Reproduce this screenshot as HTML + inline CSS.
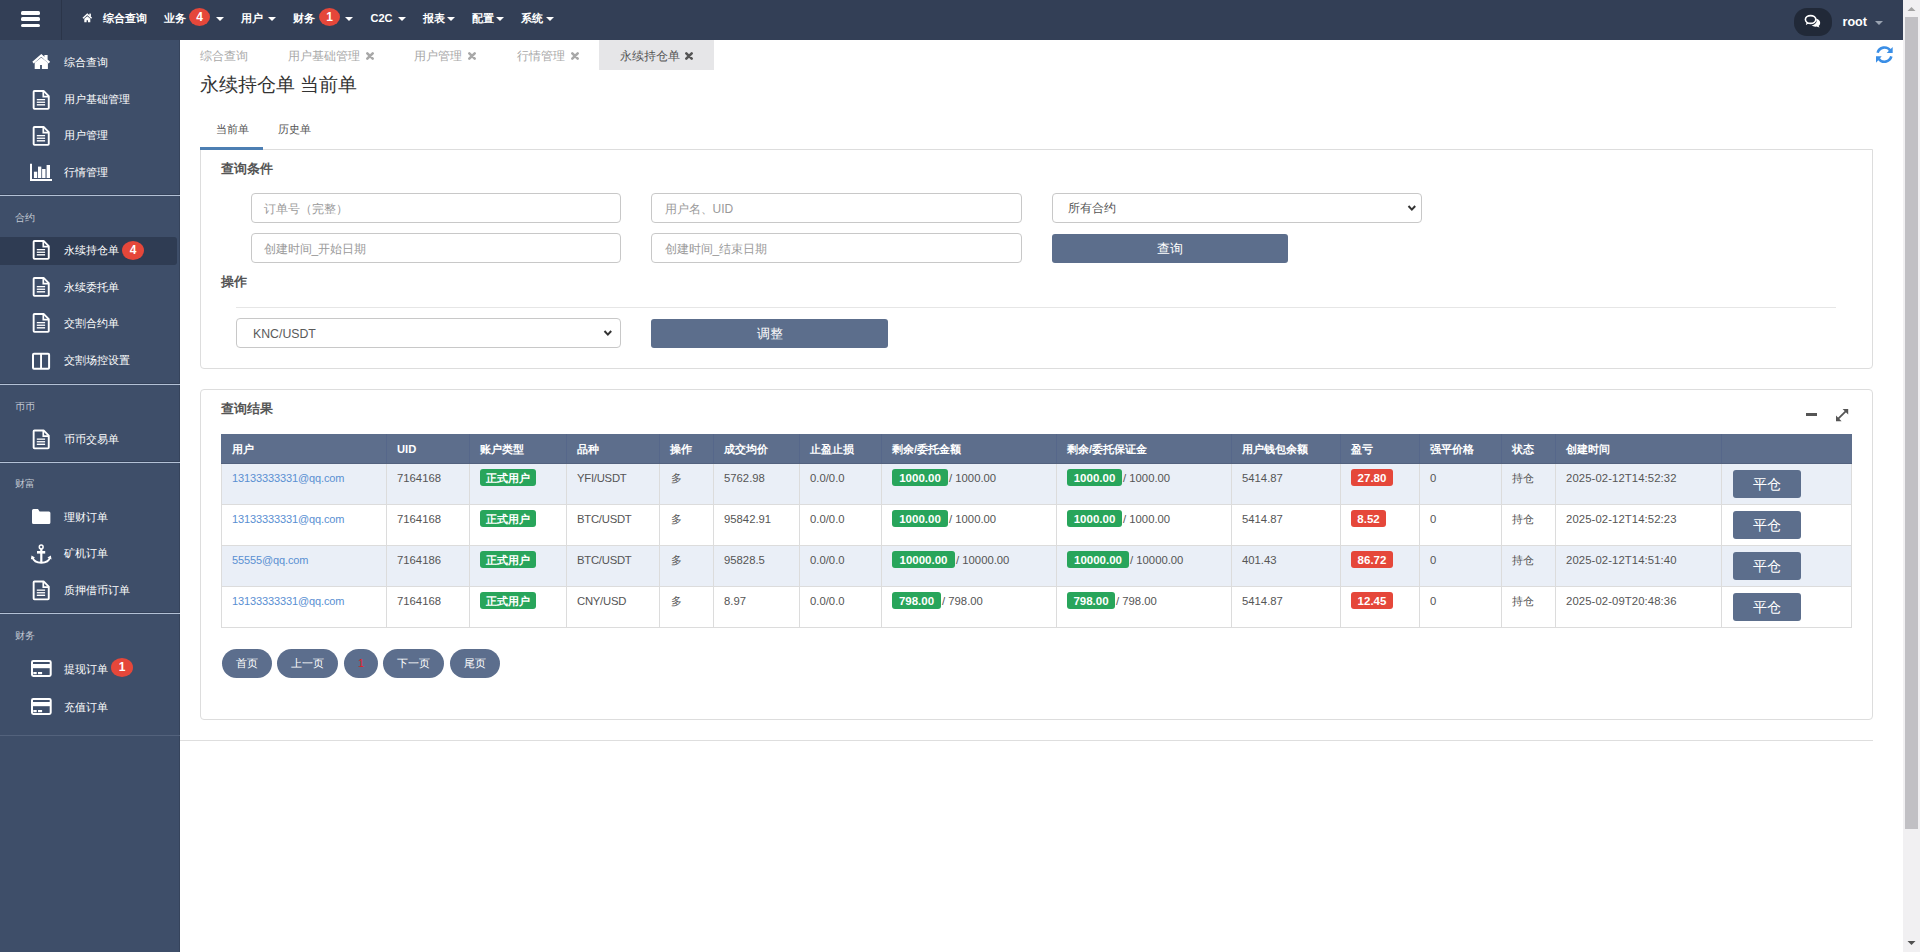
<!DOCTYPE html>
<html><head><meta charset="utf-8"><style>
*{box-sizing:border-box;margin:0;padding:0}
html,body{width:1920px;height:952px;overflow:hidden;background:#fff;font-family:"Liberation Sans",sans-serif;font-size:12px;color:#555}
.a{position:absolute}
.t{position:absolute;white-space:nowrap}
#ov{position:absolute;left:0;top:0}
</style></head><body>
<div class="a" style="left:0px;top:0px;width:1903px;height:40px;background:#333f56;"></div>
<div class="a" style="left:61px;top:0px;width:1px;height:40px;background:#2b3549;"></div>
<div class="a" style="left:21px;top:11px;width:19px;height:3.5px;background:#fff;border-radius:1.5px"></div>
<div class="a" style="left:21px;top:17px;width:19px;height:3.5px;background:#fff;border-radius:1.5px"></div>
<div class="a" style="left:21px;top:23.5px;width:19px;height:3.5px;background:#fff;border-radius:1.5px"></div>
<div class="t" style="left:102.5px;top:13px;font-size:11px;line-height:11px;color:#fff;font-weight:700;">综合查询</div>
<div class="t" style="left:164px;top:13px;font-size:11px;line-height:11px;color:#fff;font-weight:700;">业务</div>
<div class="a" style="left:189px;top:8px;width:21px;height:18px;border-radius:50%;background:#e5473a;color:#fff;font-weight:bold;font-size:12px;line-height:18px;text-align:center">4</div>
<div class="t" style="left:241px;top:13px;font-size:11px;line-height:11px;color:#fff;font-weight:700;">用户</div>
<div class="t" style="left:293px;top:13px;font-size:11px;line-height:11px;color:#fff;font-weight:700;">财务</div>
<div class="a" style="left:319px;top:8px;width:21px;height:18px;border-radius:50%;background:#e5473a;color:#fff;font-weight:bold;font-size:12px;line-height:18px;text-align:center">1</div>
<div class="t" style="left:370.5px;top:13.3px;font-size:11px;line-height:11px;color:#fff;font-weight:700;">C2C</div>
<div class="t" style="left:423px;top:13px;font-size:11px;line-height:11px;color:#fff;font-weight:700;">报表</div>
<div class="t" style="left:472px;top:13px;font-size:11px;line-height:11px;color:#fff;font-weight:700;">配置</div>
<div class="t" style="left:521px;top:13px;font-size:11px;line-height:11px;color:#fff;font-weight:700;">系统</div>
<div class="a" style="left:1794px;top:8px;width:38px;height:28px;background:#212938;border-radius:13px"></div>
<div class="t" style="left:1842.5px;top:15.5px;font-size:12.6px;line-height:12.6px;color:#fff;font-weight:700;">root</div>
<div class="a" style="left:0px;top:40px;width:180px;height:912px;background:#3e4e69;"></div>
<div class="a" style="left:179px;top:40px;width:1px;height:912px;background:#36445c;"></div>
<div class="t" style="left:64px;top:57px;font-size:11.2px;line-height:11.2px;color:#fff;font-weight:500;">综合查询</div>
<div class="t" style="left:64px;top:94px;font-size:11.2px;line-height:11.2px;color:#fff;font-weight:500;">用户基础管理</div>
<div class="t" style="left:64px;top:130px;font-size:11.2px;line-height:11.2px;color:#fff;font-weight:500;">用户管理</div>
<div class="t" style="left:64px;top:167px;font-size:11.2px;line-height:11.2px;color:#fff;font-weight:500;">行情管理</div>
<div class="a" style="left:0px;top:194px;width:180px;height:1px;background:#34425a;"></div>
<div class="a" style="left:0px;top:195px;width:180px;height:1px;background:#b3c1d6;"></div>
<div class="t" style="left:15px;top:212.5px;font-size:10px;line-height:10px;color:#c3c9d3;font-weight:500;">合约</div>
<div class="a" style="left:0px;top:237px;width:177px;height:28px;background:#2f3c53;border-radius:0 3px 3px 0"></div>
<div class="t" style="left:64px;top:245px;font-size:11.2px;line-height:11.2px;color:#fff;font-weight:500;">永续持仓单</div>
<div class="a" style="left:122px;top:241px;width:22px;height:19px;border-radius:50%;background:#e5473a;color:#fff;font-weight:bold;font-size:12px;line-height:19px;text-align:center">4</div>
<div class="t" style="left:64px;top:282px;font-size:11.2px;line-height:11.2px;color:#fff;font-weight:500;">永续委托单</div>
<div class="t" style="left:64px;top:318px;font-size:11.2px;line-height:11.2px;color:#fff;font-weight:500;">交割合约单</div>
<div class="t" style="left:64px;top:355px;font-size:11.2px;line-height:11.2px;color:#fff;font-weight:500;">交割场控设置</div>
<div class="a" style="left:0px;top:383px;width:180px;height:1px;background:#34425a;"></div>
<div class="a" style="left:0px;top:384px;width:180px;height:1px;background:#b3c1d6;"></div>
<div class="t" style="left:15px;top:401.5px;font-size:10px;line-height:10px;color:#c3c9d3;font-weight:500;">币币</div>
<div class="t" style="left:64px;top:434px;font-size:11.2px;line-height:11.2px;color:#fff;font-weight:500;">币币交易单</div>
<div class="a" style="left:0px;top:461px;width:180px;height:1px;background:#34425a;"></div>
<div class="a" style="left:0px;top:462px;width:180px;height:1px;background:#b3c1d6;"></div>
<div class="t" style="left:15px;top:479px;font-size:10px;line-height:10px;color:#c3c9d3;font-weight:500;">财富</div>
<div class="t" style="left:64px;top:512px;font-size:11.2px;line-height:11.2px;color:#fff;font-weight:500;">理财订单</div>
<div class="t" style="left:64px;top:548px;font-size:11.2px;line-height:11.2px;color:#fff;font-weight:500;">矿机订单</div>
<div class="t" style="left:64px;top:585px;font-size:11.2px;line-height:11.2px;color:#fff;font-weight:500;">质押借币订单</div>
<div class="a" style="left:0px;top:612px;width:180px;height:1px;background:#34425a;"></div>
<div class="a" style="left:0px;top:613px;width:180px;height:1px;background:#b3c1d6;"></div>
<div class="t" style="left:15px;top:630.5px;font-size:10px;line-height:10px;color:#c3c9d3;font-weight:500;">财务</div>
<div class="t" style="left:64px;top:664px;font-size:11.2px;line-height:11.2px;color:#fff;font-weight:500;">提现订单</div>
<div class="a" style="left:111px;top:658px;width:22px;height:19px;border-radius:50%;background:#e5473a;color:#fff;font-weight:bold;font-size:12px;line-height:19px;text-align:center">1</div>
<div class="t" style="left:64px;top:702px;font-size:11.2px;line-height:11.2px;color:#fff;font-weight:500;">充值订单</div>
<div class="a" style="left:0px;top:735px;width:180px;height:1px;background:#53627c;"></div>
<div class="t" style="left:200px;top:50px;font-size:12px;line-height:12px;color:#a8a8a8;font-weight:500;">综合查询</div>
<div class="t" style="left:288px;top:50px;font-size:12px;line-height:12px;color:#a8a8a8;font-weight:500;">用户基础管理</div>
<div class="t" style="left:414px;top:50px;font-size:12px;line-height:12px;color:#a8a8a8;font-weight:500;">用户管理</div>
<div class="t" style="left:516.5px;top:50px;font-size:12px;line-height:12px;color:#a8a8a8;font-weight:500;">行情管理</div>
<div class="a" style="left:599px;top:40px;width:115px;height:30px;background:#e6e6e8;"></div>
<div class="t" style="left:619.5px;top:50px;font-size:12px;line-height:12px;color:#555;font-weight:500;">永续持仓单</div>
<div class="t" style="left:200px;top:75.5px;font-size:18.8px;line-height:18.8px;color:#333;font-weight:400;">永续持仓单 当前单</div>
<div class="t" style="left:215.5px;top:123.5px;font-size:11.2px;line-height:11.2px;color:#555;font-weight:500;">当前单</div>
<div class="t" style="left:278px;top:123.5px;font-size:11.2px;line-height:11.2px;color:#555;font-weight:500;">历史单</div>
<div class="a" style="left:200px;top:149px;width:1673px;height:220px;border:1px solid #ddd;border-top-color:#ddd;border-radius:0 0 4px 4px"></div>
<div class="a" style="left:200px;top:147px;width:63px;height:2.5px;background:#4d7fb3;"></div>
<div class="t" style="left:221px;top:163px;font-size:12.8px;line-height:12.8px;color:#555;font-weight:700;">查询条件</div>
<div class="a" style="left:251px;top:193px;width:370px;height:30px;border:1px solid #c8c8c8;border-radius:4px;background:#fff"></div>
<div class="t" style="left:263.5px;top:202.5px;font-size:12px;line-height:12px;color:#9a9a9a;font-weight:500;">订单号（完整）</div>
<div class="a" style="left:651px;top:193px;width:371px;height:30px;border:1px solid #c8c8c8;border-radius:4px;background:#fff"></div>
<div class="t" style="left:664.5px;top:202.5px;font-size:12px;line-height:12px;color:#9a9a9a;font-weight:500;">用户名、UID</div>
<div class="a" style="left:1052px;top:193px;width:370px;height:30px;border:1px solid #c8c8c8;border-radius:4px;background:#fff"></div>
<div class="t" style="left:1067.5px;top:202.5px;font-size:11.5px;line-height:11.5px;color:#555;font-weight:500;">所有合约</div>
<div class="a" style="left:251px;top:233px;width:370px;height:30px;border:1px solid #c8c8c8;border-radius:4px;background:#fff"></div>
<div class="t" style="left:263.5px;top:242.5px;font-size:12px;line-height:12px;color:#9a9a9a;font-weight:500;">创建时间_开始日期</div>
<div class="a" style="left:651px;top:233px;width:371px;height:30px;border:1px solid #c8c8c8;border-radius:4px;background:#fff"></div>
<div class="t" style="left:664.5px;top:242.5px;font-size:12px;line-height:12px;color:#9a9a9a;font-weight:500;">创建时间_结束日期</div>
<div class="a" style="left:1052px;top:234px;width:236px;height:29px;background:#5c6e8c;border-radius:3px;color:#fff;font-size:13px;font-weight:500;line-height:29px;text-align:center">查询</div>
<div class="t" style="left:221px;top:276px;font-size:12.8px;line-height:12.8px;color:#555;font-weight:700;">操作</div>
<div class="a" style="left:236px;top:307px;width:1600px;height:1px;background:#e6e6e6;"></div>
<div class="a" style="left:236px;top:318px;width:385px;height:30px;border:1px solid #c8c8c8;border-radius:4px;background:#fff"></div>
<div class="t" style="left:253px;top:328px;font-size:12.3px;line-height:12.3px;color:#5a5a5a;font-weight:400;">KNC/USDT</div>
<div class="a" style="left:651px;top:319px;width:237px;height:29px;background:#5c6e8c;border-radius:3px;color:#fff;font-size:13px;font-weight:500;line-height:29px;text-align:center">调整</div>
<div class="a" style="left:200px;top:389px;width:1673px;height:331px;border:1px solid #ddd;border-radius:4px"></div>
<div class="t" style="left:221px;top:403px;font-size:12.8px;line-height:12.8px;color:#555;font-weight:700;">查询结果</div>
<div class="a" style="left:1806px;top:413px;width:11px;height:3px;background:#555;"></div>
<div class="a" style="left:221px;top:434px;width:1631px;height:30px;background:#5d6e8c;"></div>
<div class="a" style="left:221px;top:463px;width:1631px;height:1px;background:#53627e;"></div>
<div class="a" style="left:221px;top:464px;width:1631px;height:41px;background:#eaeff7;"></div>
<div class="a" style="left:221px;top:505px;width:1631px;height:41px;background:#fff;"></div>
<div class="a" style="left:221px;top:546px;width:1631px;height:41px;background:#eaeff7;"></div>
<div class="a" style="left:221px;top:587px;width:1631px;height:41px;background:#fff;"></div>
<div class="a" style="left:221px;top:504px;width:1631px;height:1px;background:#dcdcdc;"></div>
<div class="a" style="left:221px;top:545px;width:1631px;height:1px;background:#dcdcdc;"></div>
<div class="a" style="left:221px;top:586px;width:1631px;height:1px;background:#dcdcdc;"></div>
<div class="a" style="left:221px;top:627px;width:1631px;height:1px;background:#dcdcdc;"></div>
<div class="a" style="left:386px;top:434px;width:1px;height:29px;background:#56678a;"></div>
<div class="a" style="left:386px;top:464px;width:1px;height:164px;background:#dcdcdc;"></div>
<div class="a" style="left:469px;top:434px;width:1px;height:29px;background:#56678a;"></div>
<div class="a" style="left:469px;top:464px;width:1px;height:164px;background:#dcdcdc;"></div>
<div class="a" style="left:566px;top:434px;width:1px;height:29px;background:#56678a;"></div>
<div class="a" style="left:566px;top:464px;width:1px;height:164px;background:#dcdcdc;"></div>
<div class="a" style="left:659px;top:434px;width:1px;height:29px;background:#56678a;"></div>
<div class="a" style="left:659px;top:464px;width:1px;height:164px;background:#dcdcdc;"></div>
<div class="a" style="left:713px;top:434px;width:1px;height:29px;background:#56678a;"></div>
<div class="a" style="left:713px;top:464px;width:1px;height:164px;background:#dcdcdc;"></div>
<div class="a" style="left:799px;top:434px;width:1px;height:29px;background:#56678a;"></div>
<div class="a" style="left:799px;top:464px;width:1px;height:164px;background:#dcdcdc;"></div>
<div class="a" style="left:881px;top:434px;width:1px;height:29px;background:#56678a;"></div>
<div class="a" style="left:881px;top:464px;width:1px;height:164px;background:#dcdcdc;"></div>
<div class="a" style="left:1056px;top:434px;width:1px;height:29px;background:#56678a;"></div>
<div class="a" style="left:1056px;top:464px;width:1px;height:164px;background:#dcdcdc;"></div>
<div class="a" style="left:1231px;top:434px;width:1px;height:29px;background:#56678a;"></div>
<div class="a" style="left:1231px;top:464px;width:1px;height:164px;background:#dcdcdc;"></div>
<div class="a" style="left:1340px;top:434px;width:1px;height:29px;background:#56678a;"></div>
<div class="a" style="left:1340px;top:464px;width:1px;height:164px;background:#dcdcdc;"></div>
<div class="a" style="left:1419px;top:434px;width:1px;height:29px;background:#56678a;"></div>
<div class="a" style="left:1419px;top:464px;width:1px;height:164px;background:#dcdcdc;"></div>
<div class="a" style="left:1501px;top:434px;width:1px;height:29px;background:#56678a;"></div>
<div class="a" style="left:1501px;top:464px;width:1px;height:164px;background:#dcdcdc;"></div>
<div class="a" style="left:1555px;top:434px;width:1px;height:29px;background:#56678a;"></div>
<div class="a" style="left:1555px;top:464px;width:1px;height:164px;background:#dcdcdc;"></div>
<div class="a" style="left:1721px;top:434px;width:1px;height:29px;background:#56678a;"></div>
<div class="a" style="left:1721px;top:464px;width:1px;height:164px;background:#dcdcdc;"></div>
<div class="a" style="left:221px;top:464px;width:1px;height:164px;background:#dcdcdc;"></div>
<div class="a" style="left:1851px;top:464px;width:1px;height:164px;background:#dcdcdc;"></div>
<div class="t" style="left:232px;top:443.5px;font-size:11.2px;line-height:11.2px;color:#fff;font-weight:700;">用户</div>
<div class="t" style="left:397px;top:443.5px;font-size:11.2px;line-height:11.2px;color:#fff;font-weight:700;">UID</div>
<div class="t" style="left:480px;top:443.5px;font-size:11.2px;line-height:11.2px;color:#fff;font-weight:700;">账户类型</div>
<div class="t" style="left:577px;top:443.5px;font-size:11.2px;line-height:11.2px;color:#fff;font-weight:700;">品种</div>
<div class="t" style="left:670px;top:443.5px;font-size:11.2px;line-height:11.2px;color:#fff;font-weight:700;">操作</div>
<div class="t" style="left:724px;top:443.5px;font-size:11.2px;line-height:11.2px;color:#fff;font-weight:700;">成交均价</div>
<div class="t" style="left:810px;top:443.5px;font-size:11.2px;line-height:11.2px;color:#fff;font-weight:700;">止盈止损</div>
<div class="t" style="left:892px;top:443.5px;font-size:11.2px;line-height:11.2px;color:#fff;font-weight:700;">剩余/委托金额</div>
<div class="t" style="left:1067px;top:443.5px;font-size:11.2px;line-height:11.2px;color:#fff;font-weight:700;">剩余/委托保证金</div>
<div class="t" style="left:1242px;top:443.5px;font-size:11.2px;line-height:11.2px;color:#fff;font-weight:700;">用户钱包余额</div>
<div class="t" style="left:1351px;top:443.5px;font-size:11.2px;line-height:11.2px;color:#fff;font-weight:700;">盈亏</div>
<div class="t" style="left:1430px;top:443.5px;font-size:11.2px;line-height:11.2px;color:#fff;font-weight:700;">强平价格</div>
<div class="t" style="left:1512px;top:443.5px;font-size:11.2px;line-height:11.2px;color:#fff;font-weight:700;">状态</div>
<div class="t" style="left:1566px;top:443.5px;font-size:11.2px;line-height:11.2px;color:#fff;font-weight:700;">创建时间</div>
<div class="t" style="left:232px;top:473px;font-size:11px;line-height:11px;color:#5a8fd2;font-weight:400;letter-spacing:-0.12px">13133333331@qq.com</div>
<div class="t" style="left:397px;top:473px;font-size:11.3px;line-height:11.3px;color:#555;font-weight:400;letter-spacing:0px">7164168</div>
<div class="a" style="left:480px;top:469px;width:56px;height:17px;border-radius:3px;background:#28a55b;color:#fff;font-weight:bold;font-size:11px;line-height:18.5px;text-align:center">正式用户</div>
<div class="t" style="left:577px;top:473px;font-size:11.3px;line-height:11.3px;color:#555;font-weight:400;letter-spacing:-0.25px">YFI/USDT</div>
<div class="t" style="left:670.5px;top:473px;font-size:11px;line-height:11px;color:#555;font-weight:500;">多</div>
<div class="t" style="left:724px;top:473px;font-size:11.3px;line-height:11.3px;color:#555;font-weight:400;letter-spacing:0px">5762.98</div>
<div class="t" style="left:810px;top:473px;font-size:11.3px;line-height:11.3px;color:#555;font-weight:400;letter-spacing:0px">0.0/0.0</div>
<div class="a" style="left:892px;top:469px;width:56px;height:17px;border-radius:3px;background:#28a55b;color:#fff;font-weight:bold;font-size:11.5px;line-height:18.5px;text-align:center">1000.00</div>
<div class="t" style="left:949px;top:473px;font-size:11.3px;line-height:11.3px;color:#555;font-weight:400;letter-spacing:0px">/ 1000.00</div>
<div class="a" style="left:1067px;top:469px;width:55px;height:17px;border-radius:3px;background:#28a55b;color:#fff;font-weight:bold;font-size:11.5px;line-height:18.5px;text-align:center">1000.00</div>
<div class="t" style="left:1123px;top:473px;font-size:11.3px;line-height:11.3px;color:#555;font-weight:400;letter-spacing:0px">/ 1000.00</div>
<div class="t" style="left:1242px;top:473px;font-size:11.3px;line-height:11.3px;color:#555;font-weight:400;letter-spacing:0px">5414.87</div>
<div class="a" style="left:1351px;top:469px;width:42px;height:17px;border-radius:3px;background:#e5473a;color:#fff;font-weight:bold;font-size:11.5px;line-height:18.5px;text-align:center">27.80</div>
<div class="t" style="left:1430px;top:473px;font-size:11.3px;line-height:11.3px;color:#555;font-weight:400;letter-spacing:0px">0</div>
<div class="t" style="left:1511.5px;top:473px;font-size:11px;line-height:11px;color:#555;font-weight:500;">持仓</div>
<div class="t" style="left:1566px;top:473px;font-size:11.3px;line-height:11.3px;color:#555;font-weight:400;letter-spacing:0.1px">2025-02-12T14:52:32</div>
<div class="a" style="left:1733px;top:470px;width:68px;height:28px;background:#5c6e8c;border-radius:3px;color:#fff;font-size:14px;font-weight:500;line-height:28px;text-align:center">平仓</div>
<div class="t" style="left:232px;top:514px;font-size:11px;line-height:11px;color:#5a8fd2;font-weight:400;letter-spacing:-0.12px">13133333331@qq.com</div>
<div class="t" style="left:397px;top:514px;font-size:11.3px;line-height:11.3px;color:#555;font-weight:400;letter-spacing:0px">7164168</div>
<div class="a" style="left:480px;top:510px;width:56px;height:17px;border-radius:3px;background:#28a55b;color:#fff;font-weight:bold;font-size:11px;line-height:18.5px;text-align:center">正式用户</div>
<div class="t" style="left:577px;top:514px;font-size:11.3px;line-height:11.3px;color:#555;font-weight:400;letter-spacing:-0.25px">BTC/USDT</div>
<div class="t" style="left:670.5px;top:514px;font-size:11px;line-height:11px;color:#555;font-weight:500;">多</div>
<div class="t" style="left:724px;top:514px;font-size:11.3px;line-height:11.3px;color:#555;font-weight:400;letter-spacing:0px">95842.91</div>
<div class="t" style="left:810px;top:514px;font-size:11.3px;line-height:11.3px;color:#555;font-weight:400;letter-spacing:0px">0.0/0.0</div>
<div class="a" style="left:892px;top:510px;width:56px;height:17px;border-radius:3px;background:#28a55b;color:#fff;font-weight:bold;font-size:11.5px;line-height:18.5px;text-align:center">1000.00</div>
<div class="t" style="left:949px;top:514px;font-size:11.3px;line-height:11.3px;color:#555;font-weight:400;letter-spacing:0px">/ 1000.00</div>
<div class="a" style="left:1067px;top:510px;width:55px;height:17px;border-radius:3px;background:#28a55b;color:#fff;font-weight:bold;font-size:11.5px;line-height:18.5px;text-align:center">1000.00</div>
<div class="t" style="left:1123px;top:514px;font-size:11.3px;line-height:11.3px;color:#555;font-weight:400;letter-spacing:0px">/ 1000.00</div>
<div class="t" style="left:1242px;top:514px;font-size:11.3px;line-height:11.3px;color:#555;font-weight:400;letter-spacing:0px">5414.87</div>
<div class="a" style="left:1351px;top:510px;width:35px;height:17px;border-radius:3px;background:#e5473a;color:#fff;font-weight:bold;font-size:11.5px;line-height:18.5px;text-align:center">8.52</div>
<div class="t" style="left:1430px;top:514px;font-size:11.3px;line-height:11.3px;color:#555;font-weight:400;letter-spacing:0px">0</div>
<div class="t" style="left:1511.5px;top:514px;font-size:11px;line-height:11px;color:#555;font-weight:500;">持仓</div>
<div class="t" style="left:1566px;top:514px;font-size:11.3px;line-height:11.3px;color:#555;font-weight:400;letter-spacing:0.1px">2025-02-12T14:52:23</div>
<div class="a" style="left:1733px;top:511px;width:68px;height:28px;background:#5c6e8c;border-radius:3px;color:#fff;font-size:14px;font-weight:500;line-height:28px;text-align:center">平仓</div>
<div class="t" style="left:232px;top:555px;font-size:11px;line-height:11px;color:#5a8fd2;font-weight:400;letter-spacing:-0.12px">55555@qq.com</div>
<div class="t" style="left:397px;top:555px;font-size:11.3px;line-height:11.3px;color:#555;font-weight:400;letter-spacing:0px">7164186</div>
<div class="a" style="left:480px;top:551px;width:56px;height:17px;border-radius:3px;background:#28a55b;color:#fff;font-weight:bold;font-size:11px;line-height:18.5px;text-align:center">正式用户</div>
<div class="t" style="left:577px;top:555px;font-size:11.3px;line-height:11.3px;color:#555;font-weight:400;letter-spacing:-0.25px">BTC/USDT</div>
<div class="t" style="left:670.5px;top:555px;font-size:11px;line-height:11px;color:#555;font-weight:500;">多</div>
<div class="t" style="left:724px;top:555px;font-size:11.3px;line-height:11.3px;color:#555;font-weight:400;letter-spacing:0px">95828.5</div>
<div class="t" style="left:810px;top:555px;font-size:11.3px;line-height:11.3px;color:#555;font-weight:400;letter-spacing:0px">0.0/0.0</div>
<div class="a" style="left:892px;top:551px;width:63px;height:17px;border-radius:3px;background:#28a55b;color:#fff;font-weight:bold;font-size:11.5px;line-height:18.5px;text-align:center">10000.00</div>
<div class="t" style="left:956px;top:555px;font-size:11.3px;line-height:11.3px;color:#555;font-weight:400;letter-spacing:0px">/ 10000.00</div>
<div class="a" style="left:1067px;top:551px;width:62px;height:17px;border-radius:3px;background:#28a55b;color:#fff;font-weight:bold;font-size:11.5px;line-height:18.5px;text-align:center">10000.00</div>
<div class="t" style="left:1130px;top:555px;font-size:11.3px;line-height:11.3px;color:#555;font-weight:400;letter-spacing:0px">/ 10000.00</div>
<div class="t" style="left:1242px;top:555px;font-size:11.3px;line-height:11.3px;color:#555;font-weight:400;letter-spacing:0px">401.43</div>
<div class="a" style="left:1351px;top:551px;width:42px;height:17px;border-radius:3px;background:#e5473a;color:#fff;font-weight:bold;font-size:11.5px;line-height:18.5px;text-align:center">86.72</div>
<div class="t" style="left:1430px;top:555px;font-size:11.3px;line-height:11.3px;color:#555;font-weight:400;letter-spacing:0px">0</div>
<div class="t" style="left:1511.5px;top:555px;font-size:11px;line-height:11px;color:#555;font-weight:500;">持仓</div>
<div class="t" style="left:1566px;top:555px;font-size:11.3px;line-height:11.3px;color:#555;font-weight:400;letter-spacing:0.1px">2025-02-12T14:51:40</div>
<div class="a" style="left:1733px;top:552px;width:68px;height:28px;background:#5c6e8c;border-radius:3px;color:#fff;font-size:14px;font-weight:500;line-height:28px;text-align:center">平仓</div>
<div class="t" style="left:232px;top:596px;font-size:11px;line-height:11px;color:#5a8fd2;font-weight:400;letter-spacing:-0.12px">13133333331@qq.com</div>
<div class="t" style="left:397px;top:596px;font-size:11.3px;line-height:11.3px;color:#555;font-weight:400;letter-spacing:0px">7164168</div>
<div class="a" style="left:480px;top:592px;width:56px;height:17px;border-radius:3px;background:#28a55b;color:#fff;font-weight:bold;font-size:11px;line-height:18.5px;text-align:center">正式用户</div>
<div class="t" style="left:577px;top:596px;font-size:11.3px;line-height:11.3px;color:#555;font-weight:400;letter-spacing:-0.25px">CNY/USD</div>
<div class="t" style="left:670.5px;top:596px;font-size:11px;line-height:11px;color:#555;font-weight:500;">多</div>
<div class="t" style="left:724px;top:596px;font-size:11.3px;line-height:11.3px;color:#555;font-weight:400;letter-spacing:0px">8.97</div>
<div class="t" style="left:810px;top:596px;font-size:11.3px;line-height:11.3px;color:#555;font-weight:400;letter-spacing:0px">0.0/0.0</div>
<div class="a" style="left:892px;top:592px;width:49px;height:17px;border-radius:3px;background:#28a55b;color:#fff;font-weight:bold;font-size:11.5px;line-height:18.5px;text-align:center">798.00</div>
<div class="t" style="left:942px;top:596px;font-size:11.3px;line-height:11.3px;color:#555;font-weight:400;letter-spacing:0px">/ 798.00</div>
<div class="a" style="left:1067px;top:592px;width:48px;height:17px;border-radius:3px;background:#28a55b;color:#fff;font-weight:bold;font-size:11.5px;line-height:18.5px;text-align:center">798.00</div>
<div class="t" style="left:1116px;top:596px;font-size:11.3px;line-height:11.3px;color:#555;font-weight:400;letter-spacing:0px">/ 798.00</div>
<div class="t" style="left:1242px;top:596px;font-size:11.3px;line-height:11.3px;color:#555;font-weight:400;letter-spacing:0px">5414.87</div>
<div class="a" style="left:1351px;top:592px;width:42px;height:17px;border-radius:3px;background:#e5473a;color:#fff;font-weight:bold;font-size:11.5px;line-height:18.5px;text-align:center">12.45</div>
<div class="t" style="left:1430px;top:596px;font-size:11.3px;line-height:11.3px;color:#555;font-weight:400;letter-spacing:0px">0</div>
<div class="t" style="left:1511.5px;top:596px;font-size:11px;line-height:11px;color:#555;font-weight:500;">持仓</div>
<div class="t" style="left:1566px;top:596px;font-size:11.3px;line-height:11.3px;color:#555;font-weight:400;letter-spacing:0.1px">2025-02-09T20:48:36</div>
<div class="a" style="left:1733px;top:593px;width:68px;height:28px;background:#5c6e8c;border-radius:3px;color:#fff;font-size:14px;font-weight:500;line-height:28px;text-align:center">平仓</div>
<div class="a" style="left:222px;top:649px;width:50px;height:29px;border-radius:15px;background:#5c6e8d;color:#fff;font-size:11.2px;font-weight:500;line-height:29px;text-align:center">首页</div>
<div class="a" style="left:277px;top:649px;width:61px;height:29px;border-radius:15px;background:#5c6e8d;color:#fff;font-size:11.2px;font-weight:500;line-height:29px;text-align:center">上一页</div>
<div class="a" style="left:344px;top:649px;width:34px;height:29px;border-radius:15px;background:#5c6e8d;color:#e02020;font-size:11.2px;font-weight:500;line-height:29px;text-align:center">1</div>
<div class="a" style="left:383px;top:649px;width:61px;height:29px;border-radius:15px;background:#5c6e8d;color:#fff;font-size:11.2px;font-weight:500;line-height:29px;text-align:center">下一页</div>
<div class="a" style="left:450px;top:649px;width:50px;height:29px;border-radius:15px;background:#5c6e8d;color:#fff;font-size:11.2px;font-weight:500;line-height:29px;text-align:center">尾页</div>
<div class="a" style="left:180px;top:740px;width:1693px;height:1px;background:#dedede;"></div>
<div class="a" style="left:1903px;top:0px;width:17px;height:952px;background:#f1f0f2;"></div>
<div class="a" style="left:1905px;top:17px;width:13px;height:812px;background:#c1c0c4;"></div>
<svg id="ov" width="1920" height="952" viewBox="0 0 1920 952"><path d="M83 18.3 L87.3 14.3 L91.6 18.3" fill="none" stroke="#fff" stroke-width="1.5"/><rect x="89.3" y="13.6" width="1.6" height="3" fill="#fff"/><path d="M84.3 22.2 V18.8 L87.3 16.2 L90.3 18.8 V22.2 H88 V20.2 H86.6 V22.2 Z" fill="#fff"/><path d="M216 17 H224 L220.0 21 Z" fill="#fff"/><path d="M268 17 H276 L272.0 21 Z" fill="#fff"/><path d="M345 17 H353 L349.0 21 Z" fill="#fff"/><path d="M398 17 H406 L402.0 21 Z" fill="#fff"/><path d="M447 17 H455 L451.0 21 Z" fill="#fff"/><path d="M496 17 H504 L500.0 21 Z" fill="#fff"/><path d="M546 17 H554 L550.0 21 Z" fill="#fff"/><ellipse cx="1810.6" cy="19.5" rx="5.2" ry="3.9" fill="none" stroke="#fff" stroke-width="1.6"/><path d="M1806.8 22.3 L1805.6 25 L1809.3 23.3 Z" fill="#fff"/><path d="M1816 18.6 Q1820.2 19.8 1820.2 23 Q1820.2 25.2 1818.6 26 L1819.6 27.4 L1816.4 26.6 Q1813.6 26.9 1811.5 25.6 Q1815.6 24.6 1816.6 21.8 Z" fill="#fff"/><path d="M1875 21 H1883 L1879.0 25 Z" fill="#9aa3b1"/><path d="M33 62.6 L41.3 55.4 L49.4 62.6" fill="none" stroke="#fff" stroke-width="2.1"/><rect x="44.4" y="55" width="3.2" height="4.6" fill="#fff"/><path d="M34.7 68.9 V62.7 L41.3 57.4 L47.9 62.7 V68.9 H41.9 V65.1 H40.1 V68.9 Z" fill="#fff"/><path d="M33.650000000000006 91.8 Q33.650000000000006 90.95 34.5 90.95 H43.6 L48.75 96.1 V108 Q48.75 108.85 47.900000000000006 108.85 H34.5 Q33.650000000000006 108.85 33.650000000000006 108 Z" fill="none" stroke="#fff" stroke-width="1.9" stroke-linejoin="round"/><path d="M43.300000000000004 91.2 V96.6 H48.5" fill="none" stroke="#fff" stroke-width="1.7"/><rect x="36.800000000000004" y="99" width="8.3" height="1.3" fill="#fff"/><rect x="36.800000000000004" y="101.6" width="8.3" height="1.3" fill="#fff"/><rect x="36.800000000000004" y="104.1" width="8.3" height="1.4" fill="#fff"/><path d="M33.650000000000006 127.8 Q33.650000000000006 126.95 34.5 126.95 H43.6 L48.75 132.1 V144 Q48.75 144.85 47.900000000000006 144.85 H34.5 Q33.650000000000006 144.85 33.650000000000006 144 Z" fill="none" stroke="#fff" stroke-width="1.9" stroke-linejoin="round"/><path d="M43.300000000000004 127.2 V132.6 H48.5" fill="none" stroke="#fff" stroke-width="1.7"/><rect x="36.800000000000004" y="135" width="8.3" height="1.3" fill="#fff"/><rect x="36.800000000000004" y="137.6" width="8.3" height="1.3" fill="#fff"/><rect x="36.800000000000004" y="140.1" width="8.3" height="1.4" fill="#fff"/><path d="M31 163.8 V179.9 H52" fill="none" stroke="#fff" stroke-width="2"/><rect x="33.9" y="171.7" width="3.3" height="6.3" fill="#fff"/><rect x="38" y="166.6" width="3.3" height="11.4" fill="#fff"/><rect x="42.1" y="169" width="3.4" height="9" fill="#fff"/><rect x="46.6" y="165" width="3.4" height="13" fill="#fff"/><path d="M33.650000000000006 241.8 Q33.650000000000006 240.95 34.5 240.95 H43.6 L48.75 246.1 V258 Q48.75 258.85 47.900000000000006 258.85 H34.5 Q33.650000000000006 258.85 33.650000000000006 258 Z" fill="none" stroke="#fff" stroke-width="1.9" stroke-linejoin="round"/><path d="M43.300000000000004 241.2 V246.6 H48.5" fill="none" stroke="#fff" stroke-width="1.7"/><rect x="36.800000000000004" y="249" width="8.3" height="1.3" fill="#fff"/><rect x="36.800000000000004" y="251.6" width="8.3" height="1.3" fill="#fff"/><rect x="36.800000000000004" y="254.1" width="8.3" height="1.4" fill="#fff"/><path d="M33.650000000000006 278.8 Q33.650000000000006 277.95 34.5 277.95 H43.6 L48.75 283.1 V295 Q48.75 295.85 47.900000000000006 295.85 H34.5 Q33.650000000000006 295.85 33.650000000000006 295 Z" fill="none" stroke="#fff" stroke-width="1.9" stroke-linejoin="round"/><path d="M43.300000000000004 278.2 V283.6 H48.5" fill="none" stroke="#fff" stroke-width="1.7"/><rect x="36.800000000000004" y="286" width="8.3" height="1.3" fill="#fff"/><rect x="36.800000000000004" y="288.6" width="8.3" height="1.3" fill="#fff"/><rect x="36.800000000000004" y="291.1" width="8.3" height="1.4" fill="#fff"/><path d="M33.650000000000006 314.8 Q33.650000000000006 313.95 34.5 313.95 H43.6 L48.75 319.1 V331 Q48.75 331.85 47.900000000000006 331.85 H34.5 Q33.650000000000006 331.85 33.650000000000006 331 Z" fill="none" stroke="#fff" stroke-width="1.9" stroke-linejoin="round"/><path d="M43.300000000000004 314.2 V319.6 H48.5" fill="none" stroke="#fff" stroke-width="1.7"/><rect x="36.800000000000004" y="322" width="8.3" height="1.3" fill="#fff"/><rect x="36.800000000000004" y="324.6" width="8.3" height="1.3" fill="#fff"/><rect x="36.800000000000004" y="327.1" width="8.3" height="1.4" fill="#fff"/><rect x="33" y="353.8" width="16.1" height="14.9" rx="1" fill="none" stroke="#fff" stroke-width="2"/><rect x="40.1" y="353.8" width="1.9" height="14.9" fill="#fff"/><path d="M33.650000000000006 431.3 Q33.650000000000006 430.45 34.5 430.45 H43.6 L48.75 435.6 V447.5 Q48.75 448.35 47.900000000000006 448.35 H34.5 Q33.650000000000006 448.35 33.650000000000006 447.5 Z" fill="none" stroke="#fff" stroke-width="1.9" stroke-linejoin="round"/><path d="M43.300000000000004 430.7 V436.1 H48.5" fill="none" stroke="#fff" stroke-width="1.7"/><rect x="36.800000000000004" y="438.5" width="8.3" height="1.3" fill="#fff"/><rect x="36.800000000000004" y="441.1" width="8.3" height="1.3" fill="#fff"/><rect x="36.800000000000004" y="443.6" width="8.3" height="1.4" fill="#fff"/><path d="M32 510.5 Q32 509 33.5 509 H38 L39.6 511.4 H48.9 Q50.4 511.4 50.4 512.9 V522.4 Q50.4 523.9 48.9 523.9 H33.5 Q32 523.9 32 522.4 Z" fill="#fff"/><circle cx="41.2" cy="547" r="1.9" fill="none" stroke="#fff" stroke-width="1.5"/><rect x="37" y="551" width="8.2" height="2.6" fill="#fff"/><rect x="40.2" y="549" width="2.2" height="14" fill="#fff"/><path d="M32.6 557.5 Q34 562.6 41.3 562.8 Q48.6 562.6 50 557.5" fill="none" stroke="#fff" stroke-width="2"/><path d="M30.9 559.5 L31.5 555.5 L35 557.6 Z M51.5 559.5 L50.9 555.5 L47.4 557.6 Z" fill="#fff"/><path d="M33.650000000000006 582.3 Q33.650000000000006 581.45 34.5 581.45 H43.6 L48.75 586.6 V598.5 Q48.75 599.35 47.900000000000006 599.35 H34.5 Q33.650000000000006 599.35 33.650000000000006 598.5 Z" fill="none" stroke="#fff" stroke-width="1.9" stroke-linejoin="round"/><path d="M43.300000000000004 581.7 V587.1 H48.5" fill="none" stroke="#fff" stroke-width="1.7"/><rect x="36.800000000000004" y="589.5" width="8.3" height="1.3" fill="#fff"/><rect x="36.800000000000004" y="592.1" width="8.3" height="1.3" fill="#fff"/><rect x="36.800000000000004" y="594.6" width="8.3" height="1.4" fill="#fff"/><rect x="32" y="661" width="18.7" height="14.9" rx="1.3" fill="none" stroke="#fff" stroke-width="2"/><rect x="32" y="664" width="18.7" height="4.2" fill="#fff"/><rect x="33.3" y="672" width="3.4" height="2.2" fill="#fff"/><rect x="38" y="672" width="4.1" height="2.2" fill="#fff"/><rect x="32" y="699" width="18.7" height="14.9" rx="1.3" fill="none" stroke="#fff" stroke-width="2"/><rect x="32" y="702" width="18.7" height="4.2" fill="#fff"/><rect x="33.3" y="710" width="3.4" height="2.2" fill="#fff"/><rect x="38" y="710" width="4.1" height="2.2" fill="#fff"/><path d="M367.3 53.3 L372.7 58.7 M372.7 53.3 L367.3 58.7" stroke="#a8a8a8" stroke-width="2.6" stroke-linecap="round"/><path d="M469.3 53.3 L474.7 58.7 M474.7 53.3 L469.3 58.7" stroke="#a8a8a8" stroke-width="2.6" stroke-linecap="round"/><path d="M572.3 53.3 L577.7 58.7 M577.7 53.3 L572.3 58.7" stroke="#a8a8a8" stroke-width="2.6" stroke-linecap="round"/><path d="M686.3 53.3 L691.7 58.7 M691.7 53.3 L686.3 58.7" stroke="#555" stroke-width="2.6" stroke-linecap="round"/><path d="M1877.64 52.76 A7.1 7.1 0 0 1 1890.3 50.5" fill="none" stroke="#3a8ee6" stroke-width="2.6"/><path d="M1892.7 47.1 V52.9 H1886.7 Z" fill="#3a8ee6"/><path d="M1891.36 56.44 A7.1 7.1 0 0 1 1878.68 58.67" fill="none" stroke="#3a8ee6" stroke-width="2.6"/><path d="M1876 56.2 H1881.7 L1876 62.8 Z" fill="#3a8ee6"/><path d="M1408.5 206 L1411.85 209.6 L1415.2 206" fill="none" stroke="#333" stroke-width="2"/><path d="M604.5 331 L607.85 334.6 L611.2 331" fill="none" stroke="#333" stroke-width="2"/><path d="M1837.8 419.2 L1846.4 410.6" stroke="#555" stroke-width="1.8"/><path d="M1842.6 409 H1848.2 V414.6 Z M1836 415.6 V421.2 H1841.6 Z" fill="#555"/><path d="M1907.5 11 H1915.5 L1911.5 7 Z" fill="#a3a3a3"/><path d="M1907.5 941 H1915.5 L1911.5 945 Z" fill="#505050"/></svg>
</body></html>
